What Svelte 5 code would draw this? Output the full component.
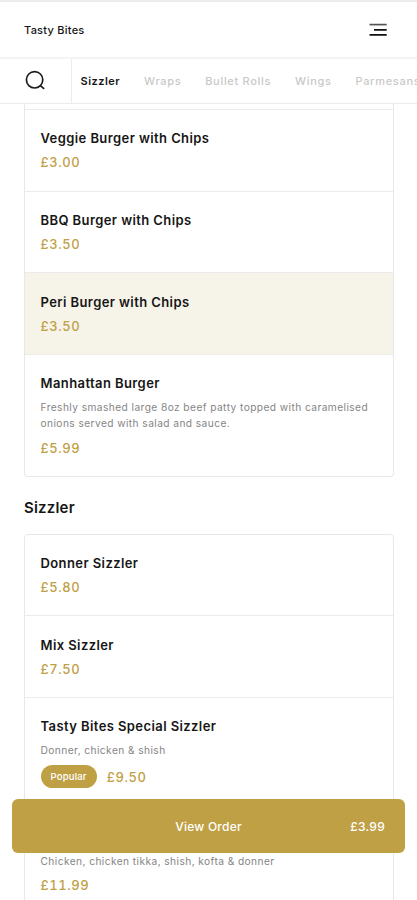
<script>
  const categories = ['Sizzler', 'Wraps', 'Bullet Rolls', 'Wings', 'Parmesans'];

  const burgers = [
    { name: 'Veggie Burger with Chips', price: '£3.00' },
    { name: 'BBQ Burger with Chips', price: '£3.50' },
    { name: 'Peri Burger with Chips', price: '£3.50' },
    {
      name: 'Manhattan Burger',
      description: 'Freshly smashed large 8oz beef patty topped with caramelised onions served with salad and sauce.',
      price: '£5.99'
    }
  ];

  const sizzlers = [
    { name: 'Donner Sizzler', price: '£5.80' },
    { name: 'Mix Sizzler', price: '£7.50' },
    { name: 'Tasty Bites Special Sizzler', description: 'Donner, chicken & shish', price: '£9.50', popular: true },
    { name: 'Mega Sizzler', description: 'Chicken, chicken tikka, shish, kofta & donner', price: '£11.99' }
  ];

  let activeCategory = $state('Sizzler');
  let selected = $state('Peri Burger with Chips');
</script>

{#snippet menuItem(item)}
  <button class="item" class:selected={selected === item.name} onclick={() => (selected = item.name)}>
    <span class="name">{item.name}</span>
    {#if item.description}
      <span class="description">{item.description}</span>
    {/if}
    <span class="price-row" class:tall={item.popular}>
      {#if item.popular}
        <span class="badge">Popular</span>
      {/if}
      <span class="price">{item.price}</span>
    </span>
  </button>
{/snippet}

<div class="app">
  <header>
    <span class="brand">Tasty Bites</span>
    <button class="icon-btn" aria-label="Menu">
      <svg width="18" height="14" viewBox="0 0 18 14" fill="none" stroke-width="1.7">
        <path d="M0.5 1.6H17.7" stroke="#555" />
        <path d="M5 6.8H17.7M0.5 11.9H17.7" stroke="#111" />
      </svg>
    </button>
  </header>

  <nav>
    <button class="search" aria-label="Search">
      <svg width="22" height="22" viewBox="0 0 22 22" fill="none" stroke="#1c1c1c" stroke-width="1.7">
        <circle cx="9.6" cy="9.8" r="8.2" />
        <path d="M15.3 15.6L19.2 18.9" />
      </svg>
    </button>
    <div class="tabs">
      {#each categories as category}
        <button class="tab" class:active={activeCategory === category} onclick={() => (activeCategory = category)}>
          {category}
        </button>
      {/each}
    </div>
  </nav>

  <main>
    <section class="card continued">
      {#each burgers as item}
        {@render menuItem(item)}
      {/each}
    </section>

    <h2>Sizzler</h2>
    <section class="card">
      {#each sizzlers as item}
        {@render menuItem(item)}
      {/each}
    </section>
  </main>

  <button class="order-bar">
    <span></span>
    <span>View Order</span>
    <span class="total">£3.99</span>
  </button>
</div>

<style>
  :global(body) { margin: 0; background: #fff; }

  .app {
    position: relative;
    display: flex;
    flex-direction: column;
    height: 900px;
    overflow: hidden;
    box-sizing: border-box;
    border-top: 2px solid #ececec;
    background: #fff;
    color: #161616;
    font-family: Inter, 'Liberation Sans', sans-serif;
  }

  button {
    margin: 0;
    padding: 0;
    border: none;
    background: none;
    color: inherit;
    font: inherit;
    text-align: left;
    cursor: pointer;
  }

  /* Header */
  header {
    display: flex;
    flex: none;
    align-items: center;
    justify-content: space-between;
    height: 55px;
    padding: 0 30px 0 24px;
    border-bottom: 2px solid #f4f4f4;
  }

  .brand { font-size: 11px; font-weight: 500; letter-spacing: 0.25px; }

  .icon-btn, .search { display: flex; align-items: center; }

  /* Category tabs */
  nav {
    display: flex;
    flex: none;
    height: 44px;
    border-bottom: 1px solid #ebebeb;
  }

  .search {
    flex: none;
    width: 72px;
    padding-left: 25px;
    box-sizing: border-box;
    border-right: 1px solid #ececec;
  }

  .tabs {
    display: flex;
    gap: 23.8px;
    padding-left: 8.5px;
    overflow: hidden;
  }

  .tab {
    flex: none;
    color: #c9c9c9;
    font-size: 11px;
    font-weight: 500;
    letter-spacing: 0.7px;
    white-space: nowrap;
  }

  .tab.active { color: #161616; font-weight: 600; letter-spacing: 0.5px; }

  /* Menu */
  main { flex: 1; min-height: 0; padding: 0 23px 0 24px; overflow: hidden; }

  .card {
    border: 1px solid #e8e8e8;
    border-radius: 4px;
    overflow: hidden;
  }

  .card.continued {
    padding-top: 5px;
    border-top: none;
    border-radius: 0 0 4px 4px;
  }

  .item {
    display: flex;
    flex-direction: column;
    width: 100%;
    padding: 16.35px 15.5px;
    border-top: 1px solid #ebebeb;
  }

  .card:not(.continued) .item:first-child { border-top: none; }

  .item.selected { background: #f6f3e9; }

  .name { font-size: 13px; font-weight: 600; line-height: 24px; letter-spacing: 0.41px; }

  .description {
    margin: 3.7px 0 4px;
    color: #858585;
    font-size: 10.2px;
    line-height: 16.3px;
    letter-spacing: 0.42px;
  }

  .price-row { display: flex; align-items: center; gap: 10px; height: 24px; }
  .price-row.tall { height: 29.4px; }

  .price {
    color: #bfa045;
    font-size: 13px;
    font-weight: 500;
    font-variant-numeric: tabular-nums;
    letter-spacing: 0.6px;
  }

  .badge {
    padding: 0 10px;
    border-radius: 12px;
    background: #bfa045;
    color: #fff;
    font-size: 9.5px;
    font-weight: 500;
    line-height: 23px;
    letter-spacing: 0.2px;
  }

  h2 {
    margin: 18.6px 0 13.9px;
    font-size: 15px;
    font-weight: 600;
    line-height: 24px;
    letter-spacing: 0.2px;
  }

  /* Floating order button */
  .order-bar {
    position: absolute;
    right: 12px;
    bottom: 47px;
    left: 12px;
    display: grid;
    grid-template-columns: 1fr auto 1fr;
    align-items: center;
    height: 54px;
    padding: 0 20px;
    border-radius: 6px;
    background: #bfa045;
    color: #fff;
    font-size: 12px;
    font-weight: 500;
    letter-spacing: 0.25px;
  }

  .total { text-align: right; letter-spacing: 0.3px; }
</style>
